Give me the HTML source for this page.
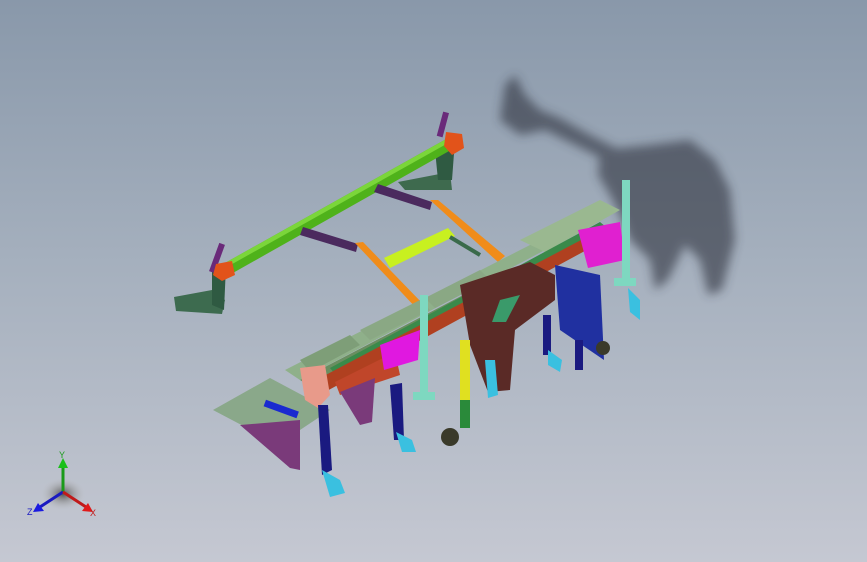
<!DOCTYPE html>
<html><head><style>
html,body{margin:0;padding:0;width:867px;height:562px;overflow:hidden}
body{background:linear-gradient(180deg,#8998aa 0%,#a4afbd 45%,#c5c8d2 100%);font-family:"Liberation Sans",sans-serif}
svg{position:absolute;left:0;top:0}
</style></head><body>
<svg width="867" height="562" viewBox="0 0 867 562">
<defs>
<filter id="b" x="-50%" y="-50%" width="200%" height="200%"><feGaussianBlur stdDeviation="5"/></filter>
<radialGradient id="ax" cx="50%" cy="50%" r="50%"><stop offset="0" stop-color="#555"/><stop offset="1" stop-color="#bbb" stop-opacity="0"/></radialGradient>
</defs>
<!-- shadow -->
<g filter="url(#b)" fill="#2e333c" opacity="0.6">
<path d="M505 85 L515 75 L525 95 L540 110 L560 118 L590 135 L620 150 L605 160 L575 145 L545 130 L520 135 L500 120 Z"/>
<path d="M600 150 L650 145 L690 140 L715 160 L730 190 L735 240 L722 290 L708 295 L700 260 L685 245 L668 280 L655 290 L650 260 L630 240 L620 215 L610 195 L598 175 Z"/>
</g>
<!-- top foot -->
<polygon points="398,182 450,172 452,190 405,190" fill="#3e6a4e"/>
<polygon points="435,150 455,140 452,180 438,180" fill="#2f5a42"/>
<rect x="440" y="112" width="6" height="25" fill="#6a2a7a" transform="rotate(15 443 124)"/>
<!-- left foot -->
<polygon points="174,297 212,290 225,300 222,314 176,311" fill="#3d6b4f"/>
<polygon points="212,268 226,266 224,310 212,305" fill="#2f5a42"/>
<rect x="214" y="243" width="6" height="30" fill="#6a2a7a" transform="rotate(20 217 258)"/>
<!-- green beam -->
<polygon points="216,268 448,138 458,146 224,278" fill="#4fb21a"/>
<polygon points="216,268 448,138 450,142 218,272" fill="#7bd63a"/>
<polygon points="446,132 462,134 464,148 452,155 444,146" fill="#e2531a"/>
<polygon points="216,264 232,261 235,275 222,281 213,275" fill="#e2531a"/>
<!-- purple arms -->
<polygon points="378,184 432,202 430,210 374,192" fill="#4b2a5e"/>
<polygon points="303,227 358,244 356,252 300,235" fill="#4b2a5e"/>
<!-- orange arms -->
<polygon points="430,200 438,200 505,256 498,262" fill="#f08c1a"/>
<polygon points="355,243 363,242 424,305 418,310" fill="#f08c1a"/>
<!-- yellow bar -->
<polygon points="384,258 448,228 455,236 390,268" fill="#c8f020"/>
<line x1="450" y1="237" x2="480" y2="255" stroke="#3a6a4a" stroke-width="4"/>
<!-- main frame plates -->
<polygon points="285,370 530,245 600,210 610,215 545,250 300,380" fill="#8fb08a"/>
<polygon points="300,360 350,335 360,345 310,372" fill="#7e9e78"/>
<polygon points="360,330 420,300 430,310 370,340" fill="#8aa884"/>
<polygon points="425,298 480,270 490,280 435,308" fill="#8aa884"/>
<polygon points="520,240 600,200 620,210 545,252" fill="#9ab890"/>
<polygon points="300,380 540,255 560,260 320,392" fill="#6a8e60"/>
<!-- main beam -->
<polygon points="330,368 600,222 612,232 340,380" fill="#3a8a4a"/>
<polygon points="320,378 600,230 605,240 325,392" fill="#b04020"/>
<polygon points="335,382 395,352 400,375 340,395" fill="#c0462a"/>
<polygon points="380,345 420,330 418,360 384,370" fill="#e018e0"/>
<polygon points="578,230 620,222 625,260 588,268" fill="#e020d0"/>
<polygon points="555,265 600,275 604,360 560,330" fill="#2030a0"/>
<!-- left side plate -->
<polygon points="213,410 270,378 330,410 300,430 270,440" fill="#8aa88a"/>
<polygon points="240,425 300,420 300,470 290,468" fill="#7a3a7a"/>
<polygon points="300,368 325,365 330,395 318,408 305,400" fill="#e89a8a"/>
<rect x="264" y="405" width="35" height="7" fill="#1a2ad0" transform="rotate(20 280 408)"/>
<!-- plows -->
<polygon points="340,392 375,378 372,422 360,425" fill="#7a3a7a"/>
<polygon points="318,405 328,405 332,470 322,475" fill="#1a1a80"/>
<polygon points="322,470 340,480 345,493 330,497" fill="#3ac0e0"/>
<polygon points="390,385 402,383 404,440 394,440" fill="#1a1a80"/>
<polygon points="396,432 412,440 416,452 402,452" fill="#3ac0e0"/>
<!-- brown plate -->
<polygon points="460,285 530,262 555,275 555,300 515,330 510,390 488,392 470,345" fill="#5a2a26"/>
<polygon points="500,300 520,295 506,322 492,322" fill="#3a9a6a"/>
<!-- posts -->
<rect x="420" y="295" width="8" height="100" fill="#7ed8c0"/>
<rect x="413" y="392" width="22" height="8" fill="#7ed8c0"/>
<rect x="622" y="180" width="8" height="100" fill="#7ed8c0"/>
<rect x="614" y="278" width="22" height="8" fill="#7ed8c0"/>
<rect x="460" y="340" width="10" height="60" fill="#e0e020"/>
<rect x="460" y="400" width="10" height="28" fill="#2a8a3a"/>
<circle cx="450" cy="437" r="9" fill="#3a3a2a"/>
<rect x="543" y="315" width="8" height="40" fill="#1a1a80"/>
<polygon points="548,350 562,360 560,372 548,365" fill="#3ac0e0"/>
<rect x="575" y="340" width="8" height="30" fill="#1a1a80"/>
<circle cx="603" cy="348" r="7" fill="#3a3a2a"/>
<polygon points="628,288 640,300 640,320 630,312" fill="#3ac0e0"/>
<polygon points="485,360 495,360 498,395 488,398" fill="#3ac0e0"/>
<!-- axis triad -->
<ellipse cx="63" cy="494" rx="22" ry="16" fill="url(#ax)"/>
<line x1="63" y1="492" x2="63" y2="466" stroke="#1a9a1a" stroke-width="3"/>
<polygon points="58,468 68,468 63,458" fill="#1ac01a"/>
<line x1="63" y1="492" x2="40" y2="507" stroke="#1a1ac0" stroke-width="3"/>
<polygon points="38,503 44,511 33,512" fill="#1a1ae0"/>
<line x1="63" y1="492" x2="86" y2="507" stroke="#c01a1a" stroke-width="3"/>
<polygon points="82,511 88,503 93,512" fill="#e01a1a"/>
<text x="59" y="458" font-size="9" fill="#1a9a1a">Y</text>
<text x="27" y="515" font-size="9" fill="#1a1ac0">Z</text>
<text x="90" y="516" font-size="9" fill="#c01a1a">X</text>
</svg>
</body></html>
